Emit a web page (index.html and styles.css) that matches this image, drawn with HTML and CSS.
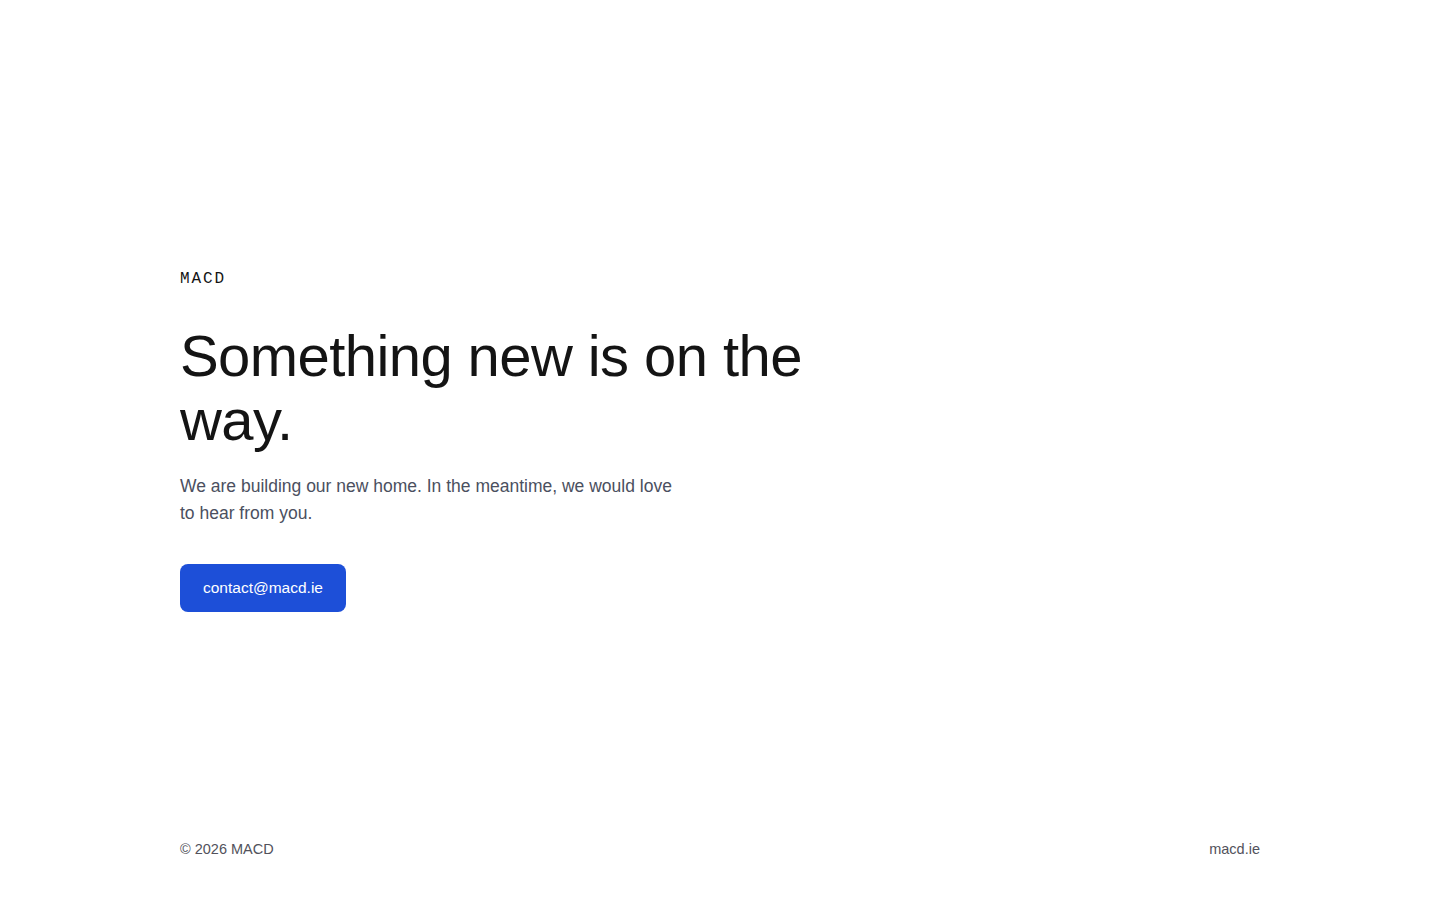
FILE: index.html
```html
<!DOCTYPE html>
<html lang="en">
<head>
<meta charset="utf-8">
<title>MACD</title>
<link rel="stylesheet" href="styles.css">
</head>
<body>
<div class="page">
  <main class="hero">
    <div class="brand">MACD</div>
    <h1 class="title">Something new is on the way.</h1>
    <p class="lead">We are building our new home. In the meantime, we would love to hear from you.</p>
    <a class="cta" href="mailto:contact@macd.ie">contact@macd.ie</a>
  </main>
  <footer class="footer">
    <span>© 2026 MACD</span>
    <span>macd.ie</span>
  </footer>
</div>
</body>
</html>
```
FILE: styles.css
```css
* { box-sizing: border-box; }
html, body { margin: 0; padding: 0; background: #ffffff; }
body {
  font-family: "Liberation Sans", Arial, sans-serif;
  color: #141414;
}
.page {
  width: 1080px;
  margin: 0 auto;
  min-height: 100vh;
  display: flex;
  flex-direction: column;
}
.hero {
  flex: 1;
  padding-top: 269px;
}
.brand {
  font-family: "Liberation Mono", "DejaVu Sans Mono", monospace;
  font-size: 16px;
  line-height: 20px;
  letter-spacing: 0.12em;
  color: #141414;
}
.title {
  margin: 35px 0 0;
  font-size: 58px;
  line-height: 64px;
  font-weight: 400;
  letter-spacing: -0.01em;
  max-width: 660px;
  color: #141414;
}
.lead {
  margin: 21px 0 0;
  font-size: 17.5px;
  line-height: 27px;
  color: #4b5060;
  max-width: 505px;
}
.cta {
  display: inline-flex;
  align-items: center;
  justify-content: center;
  margin-top: 37px;
  height: 48px;
  padding: 0 23px;
  background: #1d4fd8;
  color: #ffffff;
  border-radius: 8px;
  font-size: 15.5px;
  text-decoration: none;
}
.footer {
  display: flex;
  justify-content: space-between;
  padding: 0 0 41px;
  font-size: 14.5px;
  line-height: 20px;
  color: #52525b;
}
```
